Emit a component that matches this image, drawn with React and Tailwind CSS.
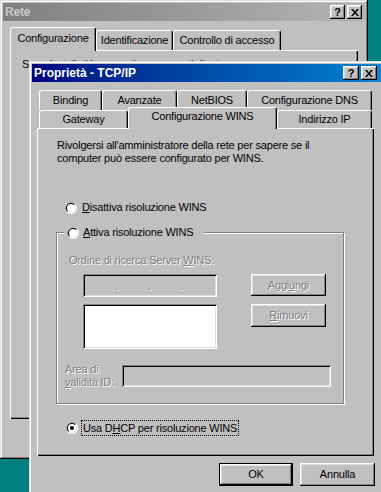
import React from 'react';

const frame =
  'shadow-[inset_-1px_-1px_0_#000,inset_1px_1px_0_#dfdfdf,inset_-2px_-2px_0_#808080,inset_2px_2px_0_#fff]';
const raised =
  'shadow-[inset_-1px_-1px_0_#000,inset_1px_1px_0_#fff,inset_-2px_-2px_0_#808080,inset_2px_2px_0_#dfdfdf]';
const sunken =
  'shadow-[inset_1px_1px_0_#808080,inset_-1px_-1px_0_#fff,inset_2px_2px_0_#000,inset_-2px_-2px_0_#dfdfdf]';
const panel =
  'shadow-[inset_1px_1px_0_#fff,inset_-1px_-1px_0_#000,inset_-2px_-2px_0_#808080]';
const tab =
  'flex items-center justify-center rounded-t-[3px] border-t border-l border-r border-t-white border-l-white border-r-black bg-[#c0c0c0] shadow-[inset_-1px_0_0_#808080]';
const disabled = 'text-[#808080] [text-shadow:1px_1px_0_#fff]';

const Radio = ({ checked }) => (
  <svg width="12" height="12" viewBox="0 0 12 12" className="shrink-0">
    <circle cx="6" cy="6" r="6" fill="#fff" />
    <path d="M1.76 10.24A6 6 0 0 1 10.24 1.76Z" fill="#808080" />
    <circle cx="6" cy="6" r="5" fill="#dfdfdf" />
    <path d="M2.46 9.54A5 5 0 0 1 9.54 2.46Z" fill="#000" />
    <circle cx="6" cy="6" r="4" fill="#fff" />
    {checked && <circle cx="6" cy="6" r="2" fill="#000" />}
  </svg>
);

const CaptionButtons = ({ w }) => (
  <div className="ml-auto flex gap-[2px]">
    <div className={`flex h-[14px] items-center justify-center bg-[#c0c0c0] ${raised} ${w}`}>
      <span className="text-[11px] font-bold leading-none text-black">?</span>
    </div>
    <div className={`flex h-[14px] items-center justify-center bg-[#c0c0c0] ${raised} ${w}`}>
      <svg width="8" height="7" viewBox="0 0 8 7">
        <path d="M0 0h2l2 2.4L6 0h2L5 3.5 8 7H6L4 4.6 2 7H0l3-3.5Z" fill="#000" />
      </svg>
    </div>
  </div>
);

const IpField = () => (
  <div className={`flex h-[23px] w-[134px] items-center bg-[#c0c0c0] px-[2px] ${sunken}`}>
    {[0, 1, 2, 3].map((i) => (
      <React.Fragment key={i}>
        <div className="w-[30px]" />
        {i < 3 && <div className={`w-[3px] pt-[2px] text-center ${disabled}`}>.</div>}
      </React.Fragment>
    ))}
  </div>
);

export default function App() {
  return (
    <div className="relative h-[492px] w-[381px] overflow-hidden bg-[#008080] font-['Liberation_Sans',Arial,sans-serif] text-[11px] leading-[13px] tracking-[-0.2px] text-black">
      {/* Finestra dietro: Rete */}
      <div className={`absolute left-0 top-0 h-[459px] w-[368px] bg-[#c0c0c0] p-[3px] ${frame}`}>
        <div className="flex h-[18px] items-center bg-linear-to-r from-[#808080] to-[#b4b4b4] pl-[2px] pr-[3px]">
          <span className="text-[12px] font-bold text-[#c8c8c8]">Rete</span>
          <CaptionButtons w="w-[15px]" />
        </div>
        <div className="ml-[7px] mt-[6px] flex h-[23px] items-end">
          <div className={`${tab} relative z-10 -mb-px h-[24px] w-[86px] pb-[3px]`}>Configurazione</div>
          <div className={`${tab} h-[20px] w-[77px]`}>Identificazione</div>
          <div className={`${tab} h-[20px] w-[108px]`}>Controllo di accesso</div>
        </div>
        <div className={`ml-[7px] h-[369px] w-[348px] bg-[#c0c0c0] pl-[12px] pt-[8px] ${panel}`}>
          <p>Sono installati i seguenti componenti di rete:</p>
        </div>
      </div>

      {/* Finestra davanti: Proprietà - TCP/IP */}
      <div className={`absolute left-[29px] top-[61px] h-[440px] w-[356px] bg-[#c0c0c0] p-[3px] ${frame}`}>
        <div className="flex h-[18px] items-center bg-linear-to-r from-[#000080] to-[#1084d0] pl-[2px] pr-[5px]">
          <span className="text-[12px] font-bold tracking-normal text-white">Proprietà - TCP/IP</span>
          <CaptionButtons w="w-[16px]" />
        </div>

        <div className="ml-[7px] mt-[8px]">
          <div className="flex h-[20px]">
            <div className={`${tab} h-[20px] w-[63px]`}>Binding</div>
            <div className={`${tab} h-[20px] w-[75px]`}>Avanzate</div>
            <div className={`${tab} h-[20px] w-[70px]`}>NetBIOS</div>
            <div className={`${tab} h-[20px] w-[125px]`}>Configurazione DNS</div>
          </div>
          <div className="relative z-10 flex h-[18px] items-end">
            <div className={`${tab} h-[18px] w-[89px]`}>Gateway</div>
            <div className={`${tab} -mb-px h-[22px] w-[149px] pb-[4px]`}>Configurazione WINS</div>
            <div className={`${tab} h-[18px] w-[95px]`}>Indirizzo IP</div>
          </div>
        </div>

        <div className={`ml-[5px] h-[328px] w-[337px] bg-[#c0c0c0] pt-[11px] ${panel}`}>
          <p className="ml-[20px]">
            Rivolgersi all'amministratore della rete per sapere se il
            <br />
            computer può essere configurato per WINS.
          </p>

          <div className="ml-[28px] mt-[36px] flex h-[13px] items-center gap-[5px]">
            <Radio />
            <span>
              <u className="underline">D</u>isattiva risoluzione WINS
            </span>
          </div>

          <div className="relative ml-[19px] mt-[18px] h-[172px] w-[288px] border border-[#808080] shadow-[1px_1px_0_#fff,inset_1px_1px_0_#fff]">
            <div className="absolute left-[7px] top-[-7px] flex h-[13px] items-center gap-[4px] bg-[#c0c0c0] pl-[3px] pr-[11px]">
              <Radio />
              <span>
                <u className="underline">A</u>ttiva risoluzione WINS
              </span>
            </div>

            <div className={`pl-[12px] pt-[21px] ${disabled}`}>
              Ordine di ricerca Server <u className="underline">W</u>INS:
            </div>

            <div className="mt-[7px] flex pl-[26px]">
              <IpField />
              <div className={`ml-[34px] flex h-[22px] w-[75px] items-center justify-center bg-[#c0c0c0] ${raised} ${disabled}`}>
                <span>
                  Aggi<u className="underline">u</u>ngi
                </span>
              </div>
            </div>

            <div className="mt-[7px] flex pl-[26px]">
              <div className={`h-[45px] w-[134px] bg-white ${sunken}`} />
              <div className={`ml-[34px] flex h-[23px] w-[75px] items-center justify-center bg-[#c0c0c0] ${raised} ${disabled}`}>
                <span>
                  <u className="underline">R</u>imuovi
                </span>
              </div>
            </div>

            <div className="mt-[14px] flex pl-[8px]">
              <div className={`w-[57px] ${disabled}`}>
                Area di
                <br />
                <u className="underline">v</u>alidità ID:
              </div>
              <div className={`mt-[2px] h-[22px] w-[209px] bg-[#c0c0c0] ${sunken}`} />
            </div>
          </div>

          <div className="ml-[29px] mt-[16px] flex h-[16px] items-center gap-[3px]">
            <Radio checked />
            <span className="border border-dotted border-black px-[1px] leading-[14px]">
              Usa D<u className="underline">H</u>CP per risoluzione WINS
            </span>
          </div>
        </div>

        <div className="ml-[187px] mt-[7px] flex gap-[7px]">
          <div className="h-[23px] w-[74px] border border-black bg-[#c0c0c0]">
            <div className={`flex h-full w-full items-center justify-center ${raised}`}>OK</div>
          </div>
          <div className={`flex h-[23px] w-[75px] items-center justify-center bg-[#c0c0c0] ${raised}`}>Annulla</div>
        </div>
      </div>
    </div>
  );
}
